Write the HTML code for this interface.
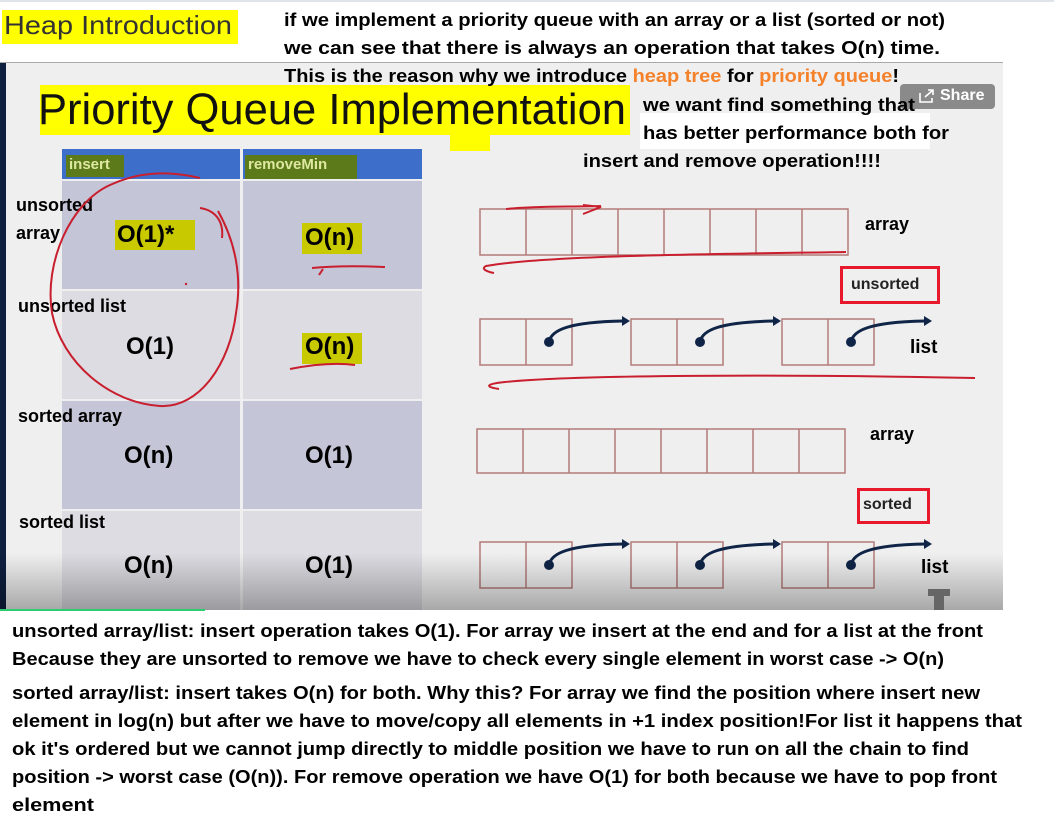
<!DOCTYPE html>
<html><head><meta charset="utf-8"><style>
*{margin:0;padding:0;box-sizing:border-box}
body{width:1054px;height:815px;background:#fff;position:relative;overflow:hidden;font-family:"Liberation Sans",Arial,sans-serif}
.a{position:absolute;white-space:nowrap;transform-origin:0 0;line-height:1}
.b{font-weight:bold;color:#000}
#frame{position:absolute;left:0;top:62px;width:1003px;height:548px;background:#efefef;border-top:1px solid #aaa;overflow:hidden}
.cell{position:absolute}
</style></head><body>
<div class="a" style="left:0;top:0;width:1054px;height:2px;background:#dfe3ea"></div>
<div class="a" style="left:2px;top:10px;width:236px;height:34px;background:#ffff00"></div>
<div class="a fit" style="left:4px;top:12px;font-size:26px;color:#333;--w:228px">Heap Introduction</div>
<div class="a b fit" style="left:284px;top:11px;font-size:18px;--w:661px">if we implement a priority queue with an array or a list (sorted or not)</div>
<div class="a b fit" style="left:284px;top:39px;font-size:18px;--w:656px">we can see that there is always an operation that takes O(n) time.</div>

<div id="frame">
 <div class="a" style="left:0;top:0;width:6px;height:548px;background:#0e1f3f"></div>
 <div class="a" style="left:40px;top:22px;width:590px;height:50px;background:#ffff00"></div>
 <div class="a" style="left:450px;top:60px;width:40px;height:28px;background:#ffff00"></div>
 <div class="a fit" style="left:38px;top:25px;font-size:44px;color:#111;--w:588px">Priority Queue Implementation</div>
 <div class="a" style="left:900px;top:21px;width:95px;height:25px;background:#8a8a8a;border-radius:4px"></div>
 <div class="a b" style="left:940px;top:25px;font-size:16px;color:#fff">Share</div>
 <svg class="a" style="left:918px;top:25px" width="18" height="16"><path d="M2 5v9h12v-4M7 9l8-7M10 2h5v5" stroke="#fff" stroke-width="1.6" fill="none"/></svg>
 <div class="cell" style="left:62px;top:86px;width:178px;height:30px;background:#3d6fca"></div>
 <div class="cell" style="left:243px;top:86px;width:179px;height:30px;background:#3d6fca"></div>
 <div class="cell" style="left:66px;top:92px;width:58px;height:22px;background:#5d7a1a"></div>
 <div class="cell" style="left:245px;top:92px;width:112px;height:24px;background:#5d7a1a"></div>
 <div class="a b" style="left:69px;top:94px;font-size:15px;color:#dde8a0">insert</div>
 <div class="a b" style="left:248px;top:94px;font-size:15px;color:#dde8a0">removeMin</div>
 <div class="cell" style="left:62px;top:118px;width:178px;height:108px;background:#c4c5d6"></div>
 <div class="cell" style="left:243px;top:118px;width:179px;height:108px;background:#c4c5d6"></div>
 <div class="cell" style="left:62px;top:228px;width:178px;height:108px;background:#dcdce2"></div>
 <div class="cell" style="left:243px;top:228px;width:179px;height:108px;background:#dcdce2"></div>
 <div class="cell" style="left:62px;top:338px;width:178px;height:108px;background:#c4c5d6"></div>
 <div class="cell" style="left:243px;top:338px;width:179px;height:108px;background:#c4c5d6"></div>
 <div class="cell" style="left:62px;top:448px;width:178px;height:100px;background:#dcdce2"></div>
 <div class="cell" style="left:243px;top:448px;width:179px;height:100px;background:#dcdce2"></div>
 <div class="cell" style="left:115px;top:157px;width:80px;height:30px;background:#c9c900"></div>
 <div class="cell" style="left:302px;top:160px;width:60px;height:31px;background:#c9c900"></div>
 <div class="cell" style="left:302px;top:270px;width:60px;height:31px;background:#c9c900"></div>
 <div class="a b" style="left:16px;top:133px;font-size:18px">unsorted</div>
 <div class="a b" style="left:16px;top:161px;font-size:18px">array</div>
 <div class="a b" style="left:117px;top:160px;font-size:24px">O(1)*</div>
 <div class="a b" style="left:305px;top:163px;font-size:24px">O(n)</div>
 <div class="a b" style="left:18px;top:234px;font-size:18px">unsorted list</div>
 <div class="a b" style="left:126px;top:272px;font-size:24px">O(1)</div>
 <div class="a b" style="left:305px;top:272px;font-size:24px">O(n)</div>
 <div class="a b" style="left:18px;top:344px;font-size:18px">sorted array</div>
 <div class="a b" style="left:124px;top:381px;font-size:24px">O(n)</div>
 <div class="a b" style="left:305px;top:381px;font-size:24px">O(1)</div>
 <div class="a b" style="left:19px;top:450px;font-size:18px">sorted list</div>
 <div class="a b" style="left:124px;top:491px;font-size:24px">O(n)</div>
 <div class="a b" style="left:305px;top:491px;font-size:24px">O(1)</div>
 <div class="a" style="left:640px;top:50px;width:290px;height:36px;background:#fff"></div>
 <div class="a b fit" style="left:643px;top:33px;font-size:18px;--w:272px">we want find something that</div>
 <div class="a b fit" style="left:643px;top:61px;font-size:18px;--w:306px">has better performance both for</div>
 <div class="a b fit" style="left:583px;top:89px;font-size:18px;--w:298px">insert and remove operation!!!!</div>
 <svg class="a" style="left:0;top:0" width="1003" height="548">
  <g fill="none" stroke="#b47c7a" stroke-width="1.5">
   <rect x="480" y="146" width="368" height="46"/>
   <path d="M526 146v46M572 146v46M618 146v46M664 146v46M710 146v46M756 146v46M802 146v46"/>
   <rect x="480" y="256" width="92" height="46"/><path d="M526 256v46"/>
   <rect x="631" y="256" width="92" height="46"/><path d="M677 256v46"/>
   <rect x="782" y="256" width="92" height="46"/><path d="M828 256v46"/>
   <rect x="477" y="366" width="368" height="44"/>
   <path d="M523 366v44M569 366v44M615 366v44M661 366v44M707 366v44M753 366v44M799 366v44"/>
   <rect x="480" y="479" width="92" height="46"/><path d="M526 479v46"/>
   <rect x="631" y="479" width="92" height="46"/><path d="M677 479v46"/>
   <rect x="782" y="479" width="92" height="46"/><path d="M828 479v46"/>
  </g>
  <g fill="#0f2447" stroke="#0f2447" stroke-width="3">
   <g id="ar"><circle cx="549" cy="279" r="5" stroke="none"/><path d="M549 279c2-12 20-20 74-21" fill="none"/><path d="M622 253l8 5-8 5z" stroke="none"/></g>
   <use href="#ar" x="151"/><use href="#ar" x="302"/>
   <use href="#ar" y="223"/><use href="#ar" x="151" y="223"/><use href="#ar" x="302" y="223"/>
  </g>
  <g fill="none" stroke="#c81e2e" stroke-width="2">
   <path d="M506 146c30-3 60-2 95-3M583 142l18 2-18 7"/>
   <path d="M846 189c-120 2-300 3-360 14-6 3 2 6 8 7"/>
   <path d="M975 315c-200-4-400-3-470 4-20 2-20 5 -6 7"/>
   <path d="M312 205c20-2 50-2 73-1M323 206l-4 6"/>
   <path d="M290 306c30-6 50-6 65-4"/>
   <path d="M200 145c14 2 24 12 22 30"/>
   <path d="M218 148C236 180 242 215 236 250 230 300 200 345 160 343 110 340 62 300 52 250 44 200 70 140 110 122 140 108 170 108 200 115"/>
  </g>
  <circle cx="186" cy="221" r="1.2" fill="#c81e2e"/>
 </svg>
 <div class="a b" style="left:865px;top:152px;font-size:18px">array</div>
 <div class="a" style="left:840px;top:203px;width:100px;height:38px;border:3px solid #e8192c"></div>
 <div class="a b" style="left:851px;top:214px;font-size:16px;color:#222">unsorted</div>
 <div class="a b" style="left:910px;top:275px;font-size:19px">list</div>
 <div class="a b" style="left:870px;top:362px;font-size:18px">array</div>
 <div class="a" style="left:857px;top:425px;width:73px;height:36px;border:3px solid #e8192c"></div>
 <div class="a b" style="left:863px;top:434px;font-size:16px;color:#222">sorted</div>
 <div class="a b" style="left:921px;top:495px;font-size:19px">list</div>
 <div class="a" style="left:0;top:490px;width:1003px;height:58px;background:linear-gradient(rgba(0,0,0,0),rgba(0,0,0,.3))"></div>
 <div class="a" style="left:928px;top:526px;width:22px;height:7px;background:#666"></div>
 <div class="a" style="left:934px;top:526px;width:10px;height:22px;background:#666"></div>
</div>
<div class="a b fit" style="left:284px;top:67px;font-size:18px;--w:615px">This is the reason why we introduce <span style="color:#f5822a">heap tree</span> for <span style="color:#f5822a">priority queue</span>!</div>
<div class="a" style="left:0;top:609px;width:205px;height:2px;background:#2ecc71"></div>

<div class="a b fit" style="left:12px;top:622px;font-size:18px;--w:971px">unsorted array/list: insert operation takes O(1). For array we insert at the end and for a list at the front</div>
<div class="a b fit" style="left:12px;top:650px;font-size:18px;--w:932px">Because they are unsorted to remove we have to check every single element in worst case -&gt; O(n)</div>
<div class="a b fit" style="left:12px;top:684px;font-size:18px;--w:968px">sorted array/list: insert takes O(n) for both. Why this? For array we find the position where insert new</div>
<div class="a b fit" style="left:12px;top:712px;font-size:18px;--w:1010px">element in log(n) but after we have to move/copy all elements in +1 index position!For list it happens that</div>
<div class="a b fit" style="left:12px;top:740px;font-size:18px;--w:957px">ok it's ordered but we cannot jump directly to middle position we have to run on  all the chain to find</div>
<div class="a b fit" style="left:12px;top:768px;font-size:18px;--w:985px">position -&gt; worst case (O(n)). For remove operation we have O(1) for both because we have to pop front</div>
<div class="a b fit" style="left:12px;top:796px;font-size:18px;--w:82px">element</div>
<script>
document.querySelectorAll('.fit').forEach(function(e){
 var w=parseFloat(getComputedStyle(e).getPropertyValue('--w'));
 var r=e.getBoundingClientRect().width;
 if(w&&r)e.style.transform='scaleX('+(w/r)+')';
});
</script>
</body></html>
